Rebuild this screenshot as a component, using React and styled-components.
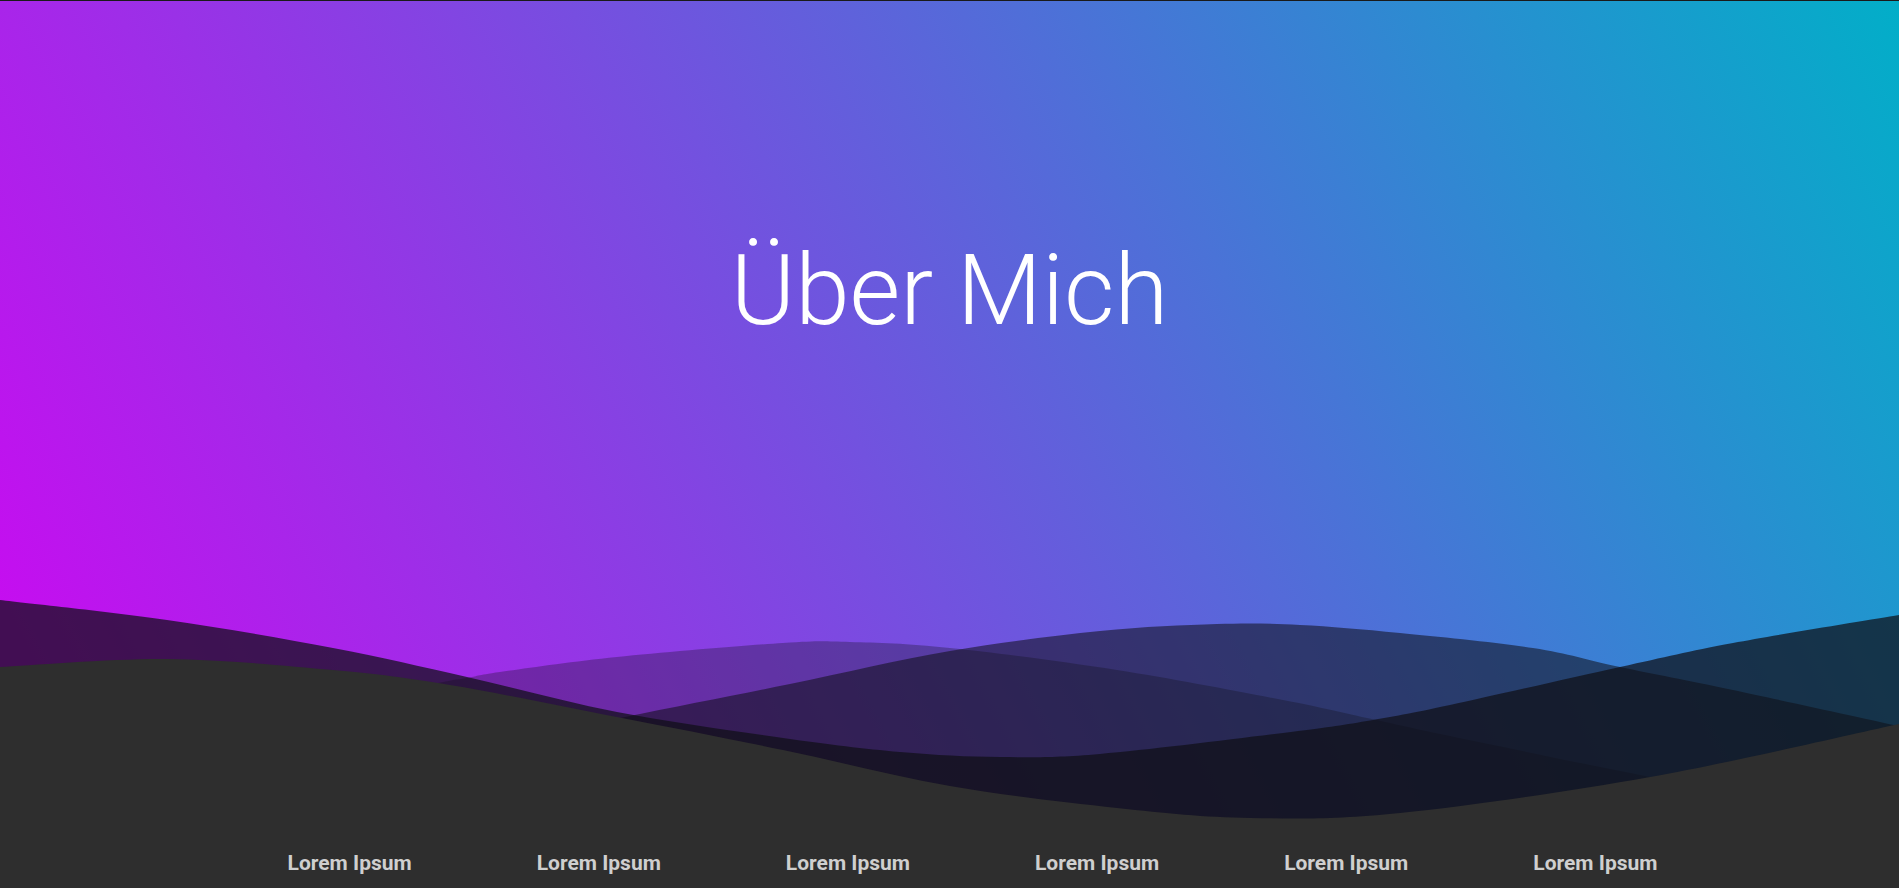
import React from 'react'
import styled, { createGlobalStyle } from 'styled-components'

const GlobalStyle = createGlobalStyle`
  html {
    background: #1c1c1c;
    overflow-y: scroll;
  }
  body {
    margin: 0;
    font-family: Roboto, 'Liberation Sans', sans-serif;
    background: #1c1c1c;
  }
  ::-webkit-scrollbar {
    width: 2px;
  }
  ::-webkit-scrollbar-track {
    background: #1c1c1c;
    margin-top: 22px;
  }
  ::-webkit-scrollbar-thumb {
    background: #6f6f6f;
  }
`

const Page = styled.div`
  border-top: 1px solid #1a1a1a;
  background: #2e2e2e;
`

const Hero = styled.header`
  display: flex;
  flex-direction: column;
  background: linear-gradient(62deg, #c70cf0 4.4%, #00b0c8 101%);
`

const TitleArea = styled.div`
  height: 579px;
  display: flex;
  align-items: center;
  justify-content: center;
`

const Title = styled.h1`
  margin: 0;
  font-family: Roboto, 'Liberation Sans', sans-serif;
  font-weight: 300;
  font-size: 98px;
  line-height: normal;
  color: #ffffff;
`

const Waves = styled.svg`
  display: block;
  width: 100%;
  height: 262px;
`

const Nav = styled.nav`
  display: flex;
  justify-content: center;
  gap: 125px;
  padding: 9px 0 12px 46px;
  background: #2e2e2e;
`

const NavItem = styled.a`
  font-family: Roboto, 'Liberation Sans', sans-serif;
  font-weight: 700;
  font-size: 21px;
  line-height: 25px;
  color: #cfcfcf;
  text-decoration: none;
  cursor: pointer;
`

const AboutSection = styled.section`
  min-height: 1334px;
  background: #2e2e2e;
`

// smooth curve through the sampled points (catmull-rom -> cubic bezier)
const wavePath = (pts, bottom) => {
  let d = `M${pts[0][0]},${pts[0][1]}`
  for (let i = 0; i < pts.length - 1; i++) {
    const p0 = pts[i - 1] || pts[i]
    const p1 = pts[i]
    const p2 = pts[i + 1]
    const p3 = pts[i + 2] || p2
    const c1x = p1[0] + (p2[0] - p0[0]) / 6
    const c1y = p1[1] + (p2[1] - p0[1]) / 6
    const c2x = p2[0] - (p3[0] - p1[0]) / 6
    const c2y = p2[1] - (p3[1] - p1[1]) / 6
    d += ` C${c1x.toFixed(1)},${c1y.toFixed(1)} ${c2x.toFixed(1)},${c2y.toFixed(1)} ${p2[0]},${p2[1]}`
  }
  return `${d} L1899,${bottom} L0,${bottom} Z`
}

const layers = [
  {
    opacity: 0.3,
    color: 'rgb(15,15,22)',
    pts: [[0, 790], [300, 712], [433, 684], [467, 678], [500, 672], [617, 657], [783, 643], [850, 642], [950, 648], [1117, 670], [1283, 700], [1367, 718], [1450, 736], [1650, 777], [1899, 825]],
  },
  {
    opacity: 0.55,
    color: 'rgb(15,15,22)',
    pts: [[0, 850], [400, 764], [620, 718], [790, 684], [950, 651], [1100, 631], [1217, 624], [1300, 625], [1400, 633], [1533, 648], [1620, 667], [1733, 690], [1899, 726]],
  },
  {
    opacity: 0.72,
    color: 'rgb(15,15,22)',
    pts: [[0, 600], [167, 620], [333, 648], [467, 677], [617, 712], [783, 738], [900, 752], [1000, 757], [1100, 754], [1283, 733], [1367, 721], [1450, 705], [1620, 667], [1733, 643], [1899, 615]],
  },
  {
    opacity: 1,
    color: '#2e2e2e',
    pts: [[0, 667], [167, 659], [333, 670], [450, 685], [617, 717], [783, 750], [950, 786], [1117, 808], [1250, 818], [1400, 813], [1650, 777], [1899, 724]],
  },
]

const links = ['Lorem Ipsum', 'Lorem Ipsum', 'Lorem Ipsum', 'Lorem Ipsum', 'Lorem Ipsum', 'Lorem Ipsum']

export default function App() {
  return (
    <>
      <GlobalStyle />
      <Page>
        <Hero>
          <TitleArea>
            <Title>Über Mich</Title>
          </TitleArea>
          <Waves viewBox="0 580 1899 262" preserveAspectRatio="none">
            {layers.map((layer, i) => (
              <path
                key={i}
                d={wavePath(layer.pts, 842)}
                fill={layer.color}
                fillOpacity={layer.opacity}
              />
            ))}
          </Waves>
        </Hero>
        <Nav>
          {links.map((label, i) => (
            <NavItem key={i}>{label}</NavItem>
          ))}
        </Nav>
        <AboutSection />
      </Page>
    </>
  )
}
